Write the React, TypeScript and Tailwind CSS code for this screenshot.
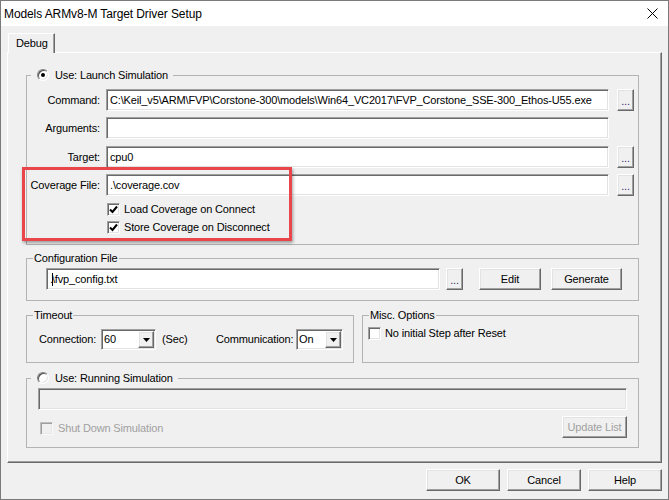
const sunken =
  "border border-t-[#a0a0a0] border-l-[#a0a0a0] border-b-white border-r-white shadow-[inset_1px_1px_0_#696969,inset_-1px_-1px_0_#e3e3e3]";
const raised =
  "border border-t-white border-l-white border-r-[#696969] border-b-[#696969] shadow-[inset_-1px_-1px_0_#a0a0a0,inset_1px_1px_0_#e3e3e3] bg-[#f0f0f0]";
const group = "border border-[#b4b4b4] min-w-0 p-0 m-0";

const Field = ({ className = "", children }: { className?: string; children?: React.ReactNode }) => (
  <div className={`${sunken} h-[22px] flex items-center pl-[3px] whitespace-nowrap overflow-hidden ${className}`}>
    {children}
  </div>
);

const Button = ({ className = "", children }: { className?: string; children?: React.ReactNode }) => (
  <div className={`${raised} h-[22px] flex items-center justify-center ${className}`}>{children}</div>
);

const Browse = () => (
  <Button className="w-[17px] ml-[8px] items-end pb-[3px] text-[#3a1b6b] leading-none">...</Button>
);

const Check = ({ checked = false, disabled = false }) => (
  <span
    className={`${sunken} w-[13px] h-[13px] shrink-0 flex items-center justify-center ${
      disabled ? "bg-[#f0f0f0] opacity-60" : "bg-white"
    }`}
  >
    {checked && (
      <svg width="9" height="9" viewBox="0 0 9 9">
        <polyline points="1,4.5 3.5,7 8,1.5" fill="none" stroke="#000" strokeWidth="2" />
      </svg>
    )}
  </span>
);

const Radio = ({ checked = false }) => (
  <span className="w-[12px] h-[12px] rounded-full border border-t-[#808080] border-l-[#808080] border-b-white border-r-white shadow-[inset_1px_1px_0_#505050,inset_-1px_-1px_0_#e3e3e3] bg-white flex items-center justify-center shrink-0">
    {checked && <span className="w-[4px] h-[4px] rounded-full bg-black" />}
  </span>
);

const Combo = ({ value, className = "" }: { value: string; className?: string }) => (
  <div className={`${sunken} h-[21px] bg-white flex items-center justify-between ${className}`}>
    <span className="pl-[2px]">{value}</span>
    <span className={`${raised} w-[16px] h-[17px] mr-[1px] flex items-center justify-center`}>
      <svg width="7" height="4" viewBox="0 0 7 4">
        <polygon points="0,0 7,0 3.5,4" fill="#000" />
      </svg>
    </span>
  </div>
);

const Row = ({ label, children }: { label: string; children: React.ReactNode }) => (
  <div className="flex items-center h-[22px]">
    <span className="w-[73px] text-right">{label}</span>
    <div className="ml-[6px] flex items-center">{children}</div>
  </div>
);

export default function App() {
  return (
    <div className="w-[669px] h-[500px] border border-[#7a7a7a] bg-[#f0f0f0] flex flex-col text-[11px] tracking-[-0.15px] text-black font-['Liberation_Sans',Arial,sans-serif] overflow-hidden">
      <div className="h-[25px] bg-white flex items-center justify-between pl-[3px] pr-[10px] shrink-0">
        <span className="text-[12px] tracking-[-0.1px] text-[#000]">Models ARMv8-M Target Driver Setup</span>
        <svg width="11" height="11" viewBox="0 0 11 11">
          <path d="M0.5 0.5 L10.5 10.5 M10.5 0.5 L0.5 10.5" stroke="#000" strokeWidth="1" />
        </svg>
      </div>

      <div className="pt-[7px] pl-[6px]">
        <div className="ml-[1px] relative z-10 -mb-[1px] w-[47px] h-[20px] bg-[#f0f0f0] border border-b-0 border-t-white border-l-white border-r-[#696969] shadow-[inset_-1px_0_0_#a0a0a0] flex items-center pl-[7px] pb-[1px]">
          Debug
        </div>
        <div className="relative w-[655px] h-[411px] border border-t-white border-l-white border-r-[#696969] border-b-[#696969] shadow-[inset_-1px_-1px_0_#a0a0a0] pl-[18px] pt-[15px]">
          <fieldset className={`${group} w-[613px] h-[177px]`}>
            <legend className="ml-[4px] pl-[6px] pr-[5px] h-[14px] flex items-center">
              <Radio checked />
              <span className="ml-[6px]">Use: Launch Simulation</span>
            </legend>
            <div className="pt-[7px]">
              <Row label="Command:">
                <Field className="w-[503px] bg-white">
                  C:\Keil_v5\ARM\FVP\Corstone-300\models\Win64_VC2017\FVP_Corstone_SSE-300_Ethos-U55.exe
                </Field>
                <Browse />
              </Row>
              <div className="mt-[6px]">
                <Row label="Arguments:">
                  <Field className="w-[503px] bg-white" />
                </Row>
              </div>
              <div className="mt-[7px]">
                <Row label="Target:">
                  <Field className="w-[503px] bg-white">cpu0</Field>
                  <Browse />
                </Row>
              </div>
              <div className="mt-[6px]">
                <Row label="Coverage File:">
                  <Field className="w-[503px] bg-white">.\coverage.cov</Field>
                  <Browse />
                </Row>
              </div>
              <div className="mt-[7px] ml-[80px] flex items-center h-[13px]">
                <Check checked />
                <span className="ml-[4px]">Load Coverage on Connect</span>
              </div>
              <div className="mt-[5px] ml-[80px] flex items-center h-[13px]">
                <Check checked />
                <span className="ml-[4px]">Store Coverage on Disconnect</span>
              </div>
            </div>
          </fieldset>

          <fieldset className={`${group} w-[613px] h-[50px] mt-[6px]`}>
            <legend className="ml-[6px] px-[1px] h-[14px] leading-[14px]">Configuration File</legend>
            <div className="pt-[3px] pl-[19px] flex items-center">
              <Field className="w-[394px] bg-white">
                .<span className="inline-block w-[1px] h-[13px] bg-black -mx-[1px]" />\fvp_config.txt
              </Field>
              <Button className="w-[17px] ml-[6px] items-end pb-[3px] text-[#3a1b6b] leading-none">...</Button>
              <Button className="w-[62px] ml-[16px]">Edit</Button>
              <Button className="w-[71px] ml-[10px]">Generate</Button>
            </div>
          </fieldset>

          <div className="flex mt-[7px]">
            <fieldset className={`${group} w-[328px] h-[55px]`}>
              <legend className="ml-[6px] px-[1px] h-[14px] leading-[14px]">Timeout</legend>
              <div className="pt-[7px] pl-[12px] flex items-center">
                <span className="w-[62px] shrink-0">Connection:</span>
                <Combo value="60" className="w-[55px] shrink-0" />
                <span className="w-[60px] pl-[6px] shrink-0">(Sec)</span>
                <span className="w-[80px] shrink-0">Communication:</span>
                <Combo value="On" className="w-[47px] shrink-0" />
              </div>
            </fieldset>
            <fieldset className={`${group} w-[277px] h-[55px] ml-[8px]`}>
              <legend className="ml-[6px] px-[1px] h-[14px] leading-[14px]">Misc. Options</legend>
              <div className="pt-[5px] pl-[5px] flex items-center h-[18px]">
                <Check />
                <span className="ml-[4px]">No initial Step after Reset</span>
              </div>
            </fieldset>
          </div>

          <fieldset className={`${group} w-[613px] h-[77px] mt-[8px]`}>
            <legend className="ml-[4px] pl-[6px] pr-[5px] h-[14px] flex items-center">
              <Radio />
              <span className="ml-[6px]">Use: Running Simulation</span>
            </legend>
            <div className="pt-[3px] pl-[11px]">
              <Field className="w-[589px] bg-[#f0f0f0]" />
              <div className="mt-[6px] flex items-start justify-between w-[589px]">
                <div className="ml-[2px] mt-[6px] flex items-center h-[13px] text-[#a0a0a0]">
                  <Check disabled />
                  <span className="ml-[5px]">Shut Down Simulation</span>
                </div>
                <Button className="w-[65px] text-[#a0a0a0]">Update List</Button>
              </div>
            </div>
          </fieldset>

          <div className="absolute left-[14px] top-[114px] w-[270px] h-[74px] border-[3px] border-[#e8464b] shadow-[1px_2px_3px_rgba(0,0,0,0.35)] pointer-events-none" />
        </div>
      </div>

      <div className="flex justify-end gap-[7px] pr-[6px] mt-[6px]">
        <Button className="w-[74px]">OK</Button>
        <Button className="w-[74px]">Cancel</Button>
        <Button className="w-[74px]">Help</Button>
      </div>
    </div>
  );
}
